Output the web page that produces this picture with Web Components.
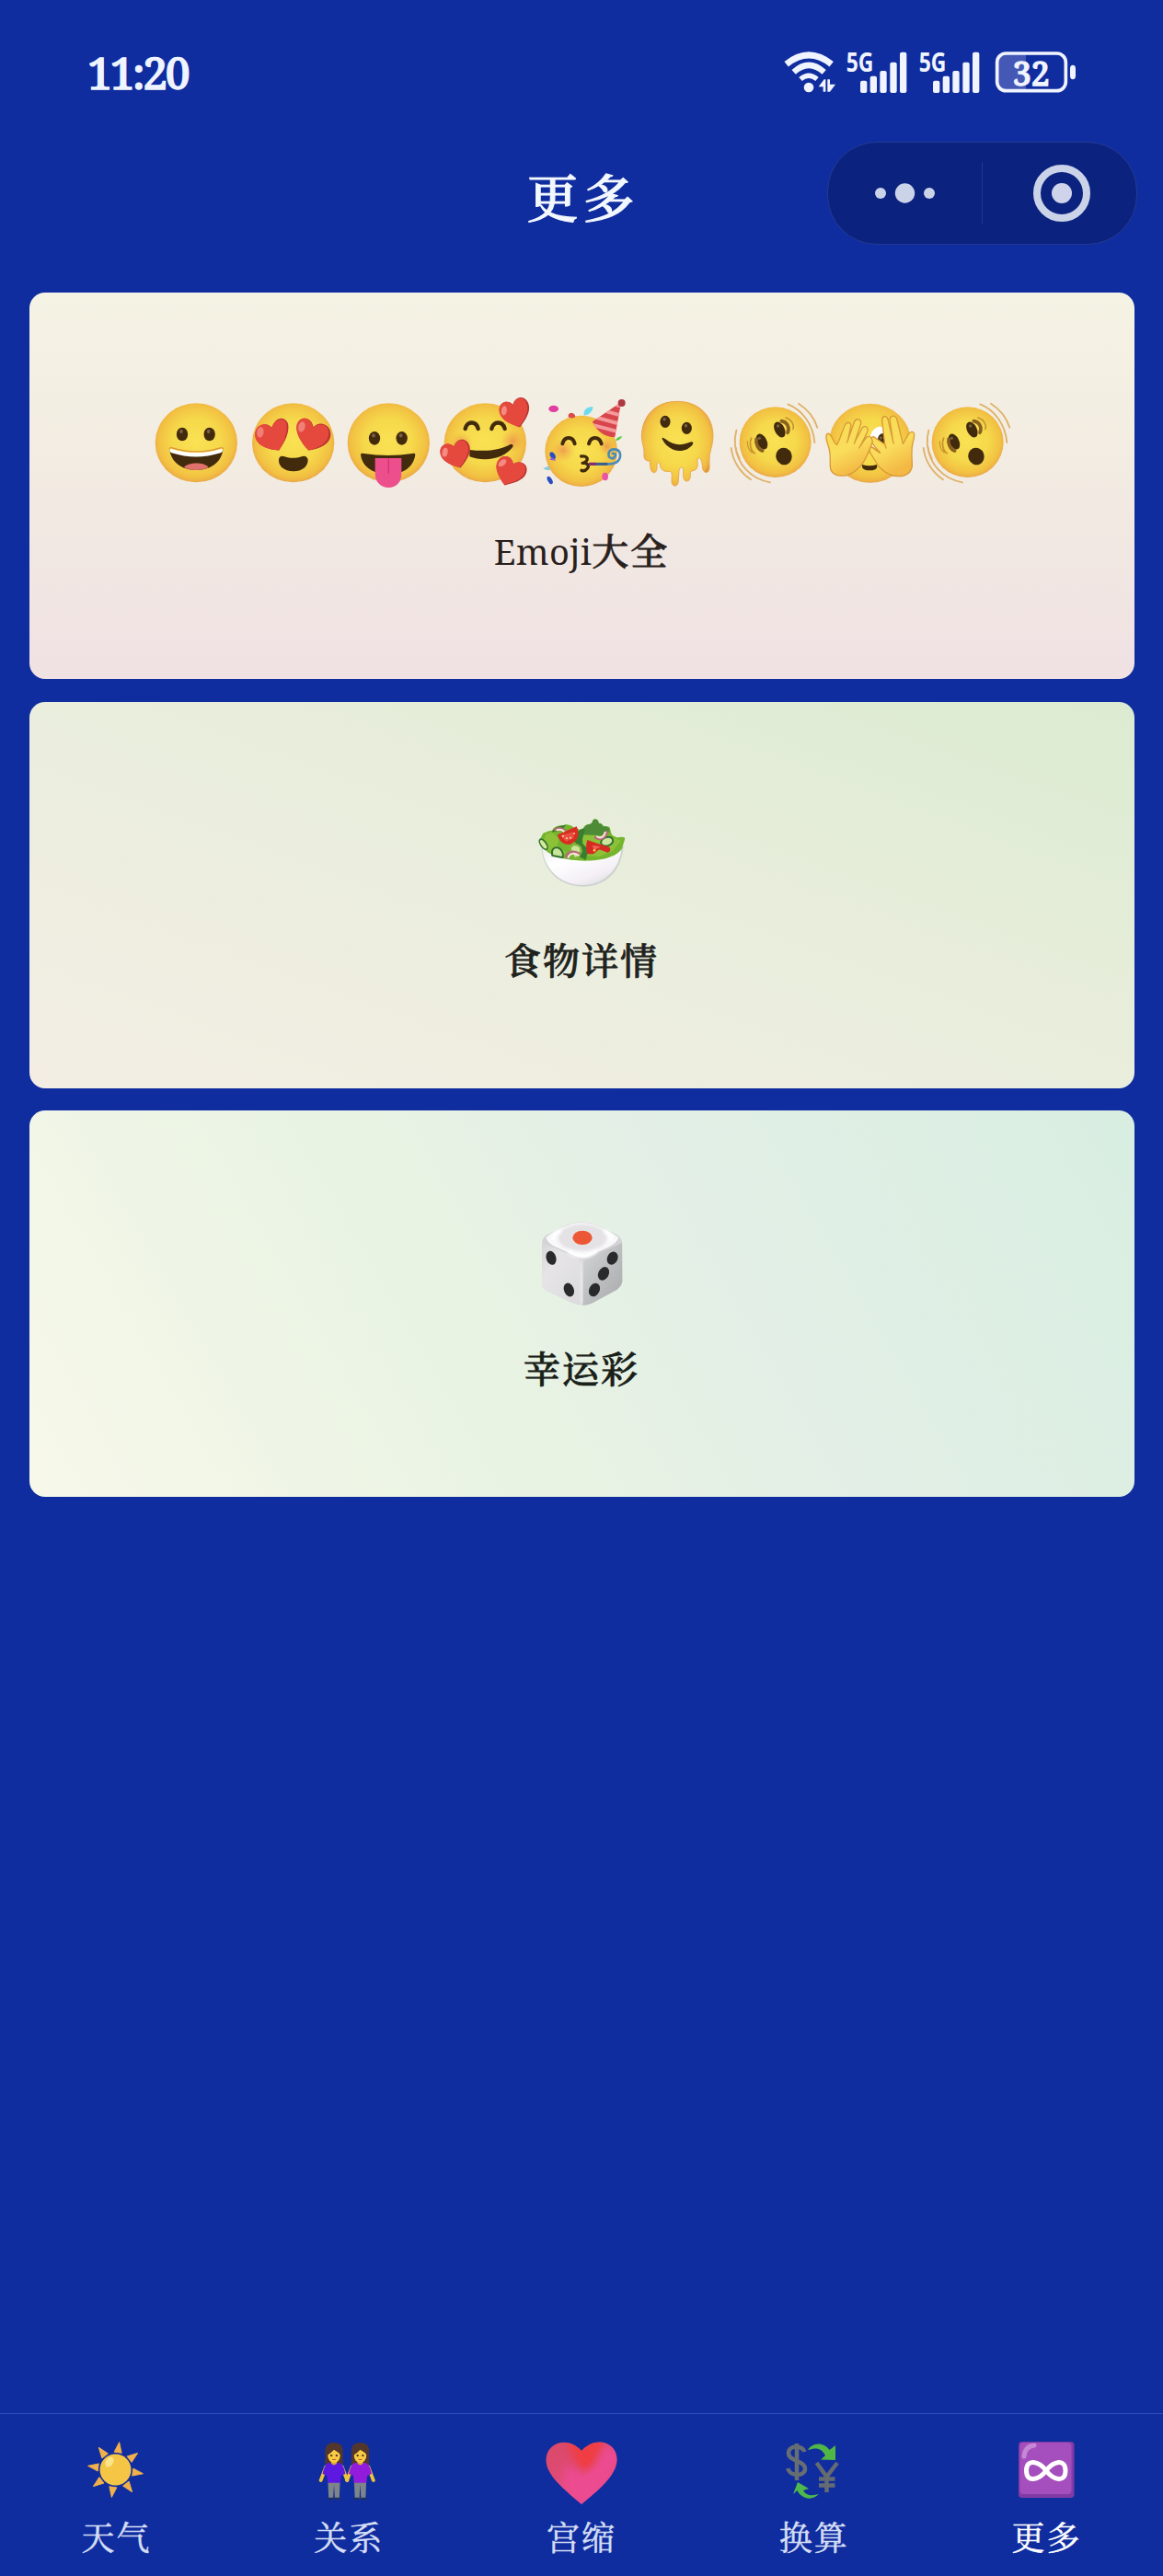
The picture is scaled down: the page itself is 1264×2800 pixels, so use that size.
<!DOCTYPE html>
<html lang="zh-CN">
<head>
<meta charset="utf-8">
<title>更多</title>
<style>
html,body{margin:0;padding:0;background:#102d9f}
body{font-family:"Noto Serif","Noto Serif CJK SC","Source Han Serif SC","DejaVu Serif","Noto Sans CJK SC",serif}
</style>
</head>
<body>
<more-page></more-page>
<script>
const faceDefs = `<defs>
<radialGradient id="f" cx=".5" cy=".48" r=".53"><stop offset="0" stop-color="#f9e253"/><stop offset=".55" stop-color="#f6d84b"/><stop offset=".86" stop-color="#f2c142"/><stop offset=".95" stop-color="#eeb044"/><stop offset="1" stop-color="#dd983c"/></radialGradient>
<radialGradient id="b"><stop offset="0" stop-color="#ed7f4d" stop-opacity=".65"/><stop offset="1" stop-color="#ed9a4d" stop-opacity="0"/></radialGradient>
<linearGradient id="h" x2=".4" y2="1"><stop offset="0" stop-color="#f7dc50"/><stop offset=".6" stop-color="#fadd5c"/><stop offset="1" stop-color="#f3b944"/></linearGradient>
<g id="heart"><path d="M0 52C-28 34-56 12-56-15C-56-35-44-48-27-48C-14-48-5-41 0-31C7-42 17-48 29-48C45-48 56-34 56-16C56 12 26 34 0 52Z" fill="#b83432"/><path d="M-3 50C-30 32-56 12-56-15C-56-35-44-48-27-48C-14-48-5-40-1-29C6-40 15-46 27-46C41-46 50-33 50-17C50 10 22 32-3 50Z" fill="#e5493e"/><ellipse cx="-38" cy="-20" rx="10" ry="17" transform="rotate(28 -38 -20)" fill="#f48a80"/></g>
<g id="eye"><ellipse rx="18.500" ry="22" fill="#422b0d"/><ellipse cx="-3" cy="-9" rx="5.500" ry="6.500" fill="#796046"/></g>
</defs>`;

const shaky = `<ellipse cx="189" cy="212" rx="117" ry="115" fill="url(#f)"/>
<g fill="none" stroke="#dfb169" stroke-width="5.500" stroke-linecap="round"><path d="M62 173C53 207 57 239 72 265"/><path d="M45 231C50 273 74 311 109 334"/><path d="M60 230C66 282 108 333 172 343"/><path d="M230 88C275 106 312 151 317 213"/><path d="M265 86C296 106 316 132 326 164"/></g>
<g fill="#422b0d"><ellipse cx="203" cy="171" rx="16" ry="27" transform="rotate(-27 203 171)"/><ellipse cx="145" cy="210" rx="16" ry="27" transform="rotate(-27 145 210)"/><ellipse cx="217" cy="258" rx="26" ry="28" transform="rotate(-22 217 258)"/></g>
<g fill="none" stroke-linecap="round"><path d="M209 143C228 146 237 164 229 181" stroke="#896020" stroke-width="11"/><path d="M223 132C242 139 251 154 247 169" stroke="#c4932e" stroke-width="5"/><path d="M127 202C124 216 133 236 147 240" stroke="#896020" stroke-width="11"/><path d="M111 198C103 216 109 241 122 248" stroke="#c4932e" stroke-width="5"/><path d="M98 209C98 225 104 239 113 246" stroke="#c4932e" stroke-width="3.500"/></g>
<g fill="#796046"><circle cx="198" cy="159" r="5"/><circle cx="137" cy="199" r="5"/></g>`;

const glyphs = {
grin: {box:'33 30 314 360', art: faceDefs+`<ellipse cx="190" cy="214" rx="134" ry="129" fill="url(#f)"/><use href="#eye" x="144" y="186"/><use href="#eye" x="233" y="186"/>
<path d="M103 236C155 257 228 257 277 236C272 280 233 303 190 303C147 303 108 280 103 236Z" fill="#422b0d"/><path d="M150 294C163 277 216 276 230 294C207 306 174 306 150 294Z" fill="#e0706c"/><path d="M106 233C158 250 222 250 274 233C278 238 276 244 269 247C215 264 163 264 110 247C103 244 101 238 106 233Z" fill="#fff"/><path d="M102 234Q105 227 113 231C166 247 216 247 267 231Q276 227 278 235" fill="none" stroke="#df9a38" stroke-width="4"/>`},
love: {box:'347 30 314 360', art: faceDefs+`<ellipse cx="505" cy="214" rx="134" ry="129" fill="url(#f)"/>
<g transform="translate(441 187) rotate(-2)"><path d="M16 52C-20 48-58 34-60 2C-61-17-50-32-34-34C-21-36-11-31-5-22C2-42 14-53 28-52C42-50 51-38 49-20C47 8 31 32 16 52Z" fill="#b83432"/><path d="M16 52C-20 48-58 34-60 2C-61-17-50-32-34-34C-21-36-11-31-7-20C0-40 14-49 27-49C40-47 46-36 44-19C41 8 29 32 16 52Z" fill="#e5493e"/><ellipse cx="-43" cy="-9" rx="11" ry="17" transform="rotate(10 -43 -9)" fill="#f08076"/></g><g transform="translate(569 187) rotate(2)"><path d="M-12 52C-39 27-58-6-53-30C-49-45-39-53-26-52C-13-51-2-40 1-24C10-35 24-39 37-34C51-29 60-14 58 3C54 34 17 47-12 52Z" fill="#b83432"/><path d="M-12 52C-37 27-58-6-53-30C-49-45-39-53-26-52C-13-51-5-40 0-22C10-33 22-36 34-32C48-27 53-13 51 2C47 30 13 46-12 52Z" fill="#e5493e"/><ellipse cx="-37" cy="-24" rx="11" ry="17" transform="rotate(12 -37 -24)" fill="#f08076"/></g><path d="M458 270C459 258 467 255 477 259C496 265 512 265 532 259C543 254 552 259 553 270C553 292 533 307 506 307C479 307 457 292 458 270Z" fill="#422b0d"/>`},
tongue:{box:'661 30 314 360', art:faceDefs+`<ellipse cx="818" cy="214" rx="134" ry="129" fill="url(#f)"/><use href="#eye" x="772" y="199"/><use href="#eye" x="861" y="199"/><path d="M727 252Q727 247 738 249C790 257 844 257 895 249Q905 247 905 253C900 294 865 316 818 316C768 316 731 292 727 252Z" fill="#422b0d"/><path d="M774 264H860V315C860 340 845 360 818 360C791 360 774 340 774 315Z" fill="#ed4f8c"/><path d="M818 264V315" stroke="#d33476" stroke-width="4"/>`},
adore:{box:'45 30 314 360', art:faceDefs+`<ellipse cx="202" cy="214" rx="134" ry="129" fill="url(#f)"/><circle cx="291" cy="208" r="38" fill="url(#b)"/><circle cx="125" cy="215" r="35" fill="url(#b)"/><g fill="none" stroke="#422b0d" stroke-linecap="round"><path d="M137 168C142 142 173 142 179 168M223 168C228 142 259 142 266 168" stroke-width="13"/></g><path d="M151 237C211 244 255 236 284 219Q294 216 293 226C265 267 201 277 151 259Z" fill="#422b0d"/><use href="#heart" transform="translate(301 117) rotate(-17) scale(.88 .93)"/><use href="#heart" transform="translate(108 252) rotate(-17) scale(.88)"/><use href="#heart" transform="translate(283 309) rotate(22) scale(.90)"/>`},
party:{box:'359 30 314 360', art:faceDefs+`<ellipse cx="514" cy="241" rx="118" ry="116" fill="url(#f)"/><circle cx="455" cy="239" r="38" fill="url(#b)"/><circle cx="597" cy="226" r="28" fill="url(#b)"/><clipPath id="c"><path d="M550 145L645 80L624 196Q573 195 550 145Z"/></clipPath><g clip-path="url(#c)"><path d="M550 145L645 80L624 199Q573 195 550 145Z" fill="#d8464d"/><g stroke="#f59a9b" stroke-width="12"><path d="M535 152L640 179M550 128L650 155M575 106L658 128M605 84L665 100"/></g></g><circle cx="646" cy="84" r="12" fill="#ac3940"/><g fill="none" stroke="#422b0d" stroke-width="12" stroke-linecap="round" stroke-linejoin="round"><path d="M453 217C459 192 487 192 493 217M539 217C545 192 573 192 580 217"/><path d="M514 258C532 255 538 266 530 274C526 280 518 279 518 280C536 278 541 289 534 298C528 306 520 306 515 304" stroke-width="10"/></g><path d="M540 283H605C631 283 643 269 641 251C638 231 609 230 604 247C600 264 619 271 625 257C628 249 617 245 615 252" fill="none" stroke="#4a8bb8" stroke-width="8"/><path d="M540 283H600" stroke="#3d5c8c" stroke-width="9"/><path d="M540 283H562" stroke="#8f2770" stroke-width="9"/><g><ellipse cx="424" cy="103" rx="16" ry="11" fill="#e13da0"/><path d="M523 125C520 105 532 98 552 96C553 111 539 124 523 125Z" fill="#6edcef"/><path d="M472 130Q470 117 482 116Q494 117 495 130Q483 137 472 130Z" fill="#d84b48"/><path d="M626 207Q628 195 648 192Q641 207 626 207Z" fill="#54cb48"/><ellipse cx="421" cy="256" rx="8" ry="13" transform="rotate(-28 421 256)" fill="#294ec3"/><path d="M411 269L419 261L433 272Z" fill="#9b59d0"/><path d="M390 297L408 290L413 302Q401 305 390 297Z" fill="#83c9dc"/><ellipse cx="412" cy="336" rx="7" ry="14" transform="rotate(-30 412 336)" fill="#294ec3"/><ellipse cx="592" cy="324" rx="10" ry="13" fill="#e854a8"/></g>`},
melt:{box:'673 30 314 360',art:faceDefs+`<path d="M829 79C904 79 946 130 946 192C946 224 933 244 934 270V295C934 316 914 315 912 297C911 281 908 264 900 263C890 263 899 286 893 297C886 309 872 300 872 315V322C872 345 850 344 849 324V304C849 290 837 292 835 304L833 340C832 360 811 358 811 340C811 319 816 307 802 307C786 309 776 303 773 286C769 273 762 275 763 292C764 318 744 316 742 295L739 272C724 276 719 263 721 247C722 229 712 211 713 188C717 126 757 79 829 79Z" fill="url(#f)" stroke="#e4a23e" stroke-width="2.500"/><use href="#eye" transform="translate(790 145) scale(.90)"/><use href="#eye" transform="translate(860 166) scale(.90)"/><path d="M780 202Q777 192 791 202C819 224 843 223 869 212Q884 208 880 218C860 249 804 250 780 202Z" fill="#422b0d"/>`},
shakeA:{box:'28 30 314 360',art:faceDefs+shaky},
peek:{box:'342 30 314 360',art:faceDefs+`<ellipse cx="497" cy="215" rx="134" ry="129" fill="url(#f)"/><ellipse cx="529" cy="200" rx="31" ry="39" fill="#fff"/><ellipse cx="538" cy="209" rx="17" ry="26" fill="#422b0d"/><circle cx="532" cy="198" r="5" fill="#796046"/><path d="M471 285Q495 293 519 285C523 300 511 304 495 304C478 304 469 299 471 285Z" fill="#422b0d"/><g fill="url(#h)" stroke="#d99a39" stroke-width="4" stroke-linejoin="round" stroke-linecap="round"><path d="M634 289C634 259 629 236 638 207C645 182 638 173 627 181C618 188 610 213 604 217L584 135C577 121 559 125 562 143L571 205L555 137C550 122 535 127 536 142L545 219L508 194C497 194 499 213 512 226L530 246L508 230C491 224 491 240 501 252C519 281 528 304 562 318C597 330 631 320 634 289Z"/><path d="M571 205L574 216M545 219L549 231M506 230L528 247" fill="none"/><path d="M367 289C366 265 370 246 359 219C351 197 353 181 362 184C374 189 378 217 389 220C398 206 407 170 417 153C424 143 439 148 433 165L425 204L445 147C450 131 471 136 466 154L448 209L470 168C479 153 495 163 487 181L466 223L485 196C498 187 509 204 502 219C487 259 469 304 423 319C395 326 367 319 367 289Z"/><path d="M425 204L421 213M448 209L445 217M466 223L461 231" fill="none"/></g>`},
shakeB:{box:'28 30 314 360',art:faceDefs+shaky},
salad:{box:'238 12 314 360',art:`<defs><linearGradient id="g" x2=".8" y2="1"><stop stop-color="#eeeef0"/><stop offset=".35" stop-color="#fff"/><stop offset=".75" stop-color="#f4f0f6"/><stop offset="1" stop-color="#dfdde3"/></linearGradient></defs>
<path d="M263 181C269 251 315 307 398 308C475 308 526 256 531 174Z" fill="#ced2cf"/><path d="M266 185C273 246 319 301 396 303C469 303 519 251 524 183Z" fill="url(#g)"/>
<path d="M256 154C267 148 262 132 278 131C287 123 300 130 301 120C313 105 334 111 344 105C358 107 366 111 371 118L402 125C396 112 409 107 415 106C421 103 426 107 430 101C427 85 446 83 450 96C449 106 457 102 464 108C469 115 481 109 486 115C490 130 491 142 501 144C513 153 522 142 534 148C539 152 530 167 527 183C508 214 453 224 404 224C350 224 293 210 270 184Z" fill="#74b52d"/>
<path d="M278 137L298 130L320 154L315 174L343 196L332 211L292 198L271 160ZM396 141L426 128L450 149L493 148L523 158L496 191L450 211L405 206Z" fill="#8cc138"/>
<path d="M398 139C397 121 405 108 416 105C423 105 429 102 430 94C436 83 449 89 450 101C459 100 464 107 464 113C478 109 486 117 486 128L465 142Z" fill="#4d8b37"/><path d="M365 154C380 133 389 116 403 119C409 129 394 146 397 167L417 188L408 221L387 211L398 192ZM297 131C304 112 322 110 344 107L330 123Z" fill="#397d2e"/>
<ellipse cx="270" cy="170" rx="9" ry="19" transform="rotate(-35 270 170)" fill="#d5e89b" stroke="#32722f" stroke-width="5"/><path d="M299 207C294 187 303 180 316 181C328 184 337 199 333 213L315 210Z" fill="#c9e598" stroke="#32722f" stroke-width="6"/><path d="M357 186C359 170 378 166 390 179C397 193 384 215 371 216Z" fill="#cde49a" stroke="#82b63e" stroke-width="7"/>
<ellipse cx="477" cy="161" rx="20" ry="14" transform="rotate(-18 477 161)" fill="#cde69f" stroke="#32722f" stroke-width="6"/>
<path d="M316 139L378 112C389 133 385 160 356 171C338 173 320 161 316 139Z" fill="#db2c22"/><path d="M325 142L366 130L369 150L344 161Z" fill="#e8513f"/><g fill="#f5dbab"><circle cx="334" cy="143" r="3"/><circle cx="346" cy="151" r="3"/><circle cx="358" cy="149" r="3"/><circle cx="370" cy="135" r="3"/></g>
<path d="M413 156L441 166L485 179Q493 192 479 197L452 187L433 202L414 202Q405 180 413 156Z" fill="#d62a23"/><path d="M429 173L456 178L435 190Z" fill="#ec6553"/><circle cx="436" cy="190" r="4" fill="#f6cf57"/>
<path d="M305 124Q326 112 341 128M345 215C348 194 370 190 388 203M437 146Q465 164 479 127" fill="none" stroke="#b66d76" stroke-width="10"/><path d="M312 124Q327 119 338 129M350 215C355 198 373 196 386 208M443 144Q464 157 472 129" fill="none" stroke="#fae6dd" stroke-width="6"/>`},
dice:{box:'238 24 314 360',art:`<defs><linearGradient id="l" x2="1" y2="1"><stop stop-color="#d5d5d7"/><stop offset=".3" stop-color="#e6e4e7"/><stop offset="1" stop-color="#dadadc"/></linearGradient><linearGradient id="r" x2="1" y2="1"><stop stop-color="#d5d6d7"/><stop offset=".6" stop-color="#b9babb"/><stop offset="1" stop-color="#a9aaab"/></linearGradient><filter id="s" x="-30%" y="-30%" width="160%" height="160%"><feGaussianBlur stdDeviation="4"/></filter></defs>
<path d="M266 152Q265 132 284 122L354 88Q395 76 438 89L508 122Q526 133 527 152V274Q526 290 510 302L430 346Q398 357 364 346L281 306Q266 297 265 282V158Z" fill="#d3d3d5"/><path d="M268 150L385 202Q399 212 399 353Q380 354 364 346L281 306Q266 297 265 282V158Z" fill="url(#l)"/><path d="M398 354L401 205L526 150L527 274Q526 290 510 302L430 346Q415 354 398 354Z" fill="url(#r)"/><path d="M391 208H397V348H391Z" fill="#efedf0" filter="url(#s)"/>
<path d="M278 132Q308 108 360 88Q397 80 435 89Q489 111 515 133Q510 151 477 166L420 192Q397 203 373 192L300 158Q282 147 278 132Z" fill="#f8f8fa"/><ellipse cx="397" cy="133" rx="80" ry="44" fill="#e5e2e6" filter="url(#s)"/><path d="M300 141Q302 118 327 111M492 142Q491 121 468 111M350 176Q398 211 443 176" stroke="#fff" stroke-width="12" fill="none" filter="url(#s)"/><ellipse cx="397" cy="133" rx="32" ry="23" fill="#ec5836"/><g fill="#292a2b"><ellipse cx="295" cy="199" rx="16" ry="23" transform="rotate(-17 295 199)"/><ellipse cx="353" cy="303" rx="16" ry="23" transform="rotate(-22 353 303)"/><ellipse cx="495" cy="200" rx="17" ry="22" transform="rotate(25 495 200)"/><ellipse cx="466" cy="250" rx="17" ry="23" transform="rotate(27 466 250)"/><ellipse cx="436" cy="303" rx="17" ry="23" transform="rotate(27 436 303)"/></g>`}
};

// Tab pictures share an 80 x 80 drawing area.
const woman = (shirt) => `<path d="M-10 19V0C-10-14 10-14 10 0V19Z" fill="#53362c"/><path d="M-7 39L-6 66H-1L0 46L1 66H6L7 39Z" fill="#7e8588"/><path d="M-6 64H-1V67H-8ZM1 64H6L8 67H1Z" fill="#203056"/><path d="M-9 22L-15 41M9 22L15 41" stroke="#efc33d" stroke-width="4" stroke-linecap="round"/><path d="M-6 17H6Q11 19 13 32L8 34L7 44H-7L-8 34L-13 32Q-11 19-6 17Z" fill="${shirt}"/><path d="M-3 12H3V18L0 20L-3 18Z" fill="#dba934"/><ellipse cy="7" rx="7" ry="10" fill="#f8cc43"/><path d="M-8 7Q-8-6 1-6Q9-5 8 7Q5 2 0-1Q-3 3-8 7Z" fill="#53362c"/><g fill="#49301f"><circle cx="-3" cy="7" r="1.300"/><circle cx="3" cy="7" r="1.300"/></g><path d="M-2 12Q0 13 2 12" stroke="#b74127" stroke-width="1.300" fill="none"/>`;
const tabArt = {
sun:`<g fill="#f1b04b" stroke="#f1b04b" stroke-width="1" stroke-linejoin="round">${[8,53,98,143,188,233,278,323].map(a=>`<path d="M39.500 9.500L43.500 20.500H35.500Z" transform="rotate(${a} 39.500 39.500)"/>`).join('')}</g><circle cx="39.500" cy="39.500" r="17" fill="#f5c646"/><ellipse cx="33" cy="31" rx="4" ry="6" transform="rotate(30 33 31)" fill="#fbe489"/>`,
pair:`<g transform="translate(24 18.500) scale(.96 .80)">${woman('#5d19e2')}</g><g transform="translate(52.500 18.500) scale(.96 .80)">${woman('#931bdb')}</g>`,
heart:`<defs><linearGradient id="p" x1=".1" y1=".1" x2=".5" y2="1"><stop stop-color="#d94a67"/><stop offset=".5" stop-color="#df4a75"/><stop offset="1" stop-color="#ef4b94"/></linearGradient><filter id="q"><feGaussianBlur stdDeviation="4"/></filter><clipPath id="k"><path d="M40 77C20 60 1.500 45 1.500 29C1.500 10 25 2 40 19C55 2 79 9 78.500 29C78 46 58 62 40 77Z"/></clipPath></defs><g clip-path="url(#k)"><path d="M0 0H80V80H0Z" fill="url(#p)"/><path d="M24 9L68 5L57 28L46 44L36 35Z" fill="#f03d43" filter="url(#q)"/><path d="M66 11L84 22L58 61L39 78L20 58L24 33L40 46L56 36Z" fill="#ed4b91" filter="url(#q)"/></g>`,
exchange:`<path d="M21 11V51M29.500 20C28 13 12 12 12 21.500C12 31 30 29 30 38.500C30 47 13 47 11.500 38" fill="none" stroke="#666e74" stroke-width="4.500"/><path d="M42.500 32L53.500 47L65 32M53.500 47V64M45 49.500H62.500M45 56.500H62.500" fill="none" stroke="#646b71" stroke-width="4.500"/><path d="M33.500 17C40 9 51 10 56.500 18L63 13V29L47 28.500L52 24C48 16 42 15 33.500 18Z" fill="#50b747"/><path d="M45 66C37 74 26 71 21.500 62L17 66L22 53L34 60L28 62C31 68 38 68 45 66Z" fill="#4eb84c"/>`,
infinity:`<rect x="9" y="9" width="60.500" height="61" rx="4" fill="#823ba4"/><rect x="10.500" y="10" width="56" height="56" rx="4" fill="#a44fbd"/><path d="M15 25Q16 14 26 13" stroke="#c588d4" stroke-width="5" fill="none" stroke-linecap="round"/><path d="M39 40.500C31 30 17.500 27 17.500 40.500C17.500 54 31 51 39 40.500C47 30 60 27 60 40.500C60 54 47 51 39 40.500Z" fill="none" stroke="#fff" stroke-width="5"/>`
};

const signal = `<text x="302" y="145" font-size="87" font-weight="700" textLength="89" lengthAdjust="spacingAndGlyphs">5G</text><rect x="348" y="173" width="22" height="40" rx="6"/><rect x="380" y="158" width="22" height="55" rx="6"/><rect x="412" y="141" width="22" height="72" rx="6"/><rect x="445" y="113" width="22" height="100" rx="6"/><rect x="477" y="80" width="22" height="133" rx="6"/>`;

class StatusBar extends HTMLElement{constructor(){super();this.attachShadow({mode:'open'}).innerHTML=`<style>
:host{display:flex;justify-content:space-between;align-items:flex-start;height:112px;padding:41px 93px 0 95px;box-sizing:border-box;color:#eff4ff}
.time{font-size:48px;line-height:75px;font-weight:500;letter-spacing:-2.500px;white-space:nowrap;-webkit-text-stroke:1.300px #eff4ff}
svg{display:block;overflow:visible;margin-top:9px}
text{font-family:"Noto Sans",sans-serif}
text.level{font-family:inherit}
</style><div class="time">11:20</div><svg width="320" height="56" viewBox="96 60 960 168"><g fill="none" stroke="#f0f4ff"><path d="M107 119Q180 60 254 119" stroke-width="21"/><path d="M131 145Q180 100 230 145" stroke-width="19"/><path d="M153 168Q180 145 207 168" stroke-width="16"/></g><g fill="#f0f4ff"><circle cx="180" cy="195" r="16"/><path d="M212 193L230 169H235V209H227V193ZM241 169H249V185H267L249 209H241Z"/>
<g>${signal}</g><g transform="translate(237)">${signal}</g>
<path d="M1032 134Q1032 122 1041 122Q1050 122 1050 134V156Q1050 169 1041 169Q1032 169 1032 156Z"/></g><path d="M797 88H888V203H797Z" fill="#4658b5"/><rect x="794" y="84" width="224" height="122" rx="29" fill="none" stroke="#f0f4ff" stroke-width="11"/><text class="level" x="845" y="188" font-size="109" font-weight="500" textLength="120" lengthAdjust="spacingAndGlyphs" fill="#f0f4ff" stroke="#f0f4ff" stroke-width="4">32</text></svg>`}}
customElements.define('status-bar',StatusBar);

class NavBar extends HTMLElement{constructor(){super();this.attachShadow({mode:'open'}).innerHTML=`<style>
:host{display:grid;grid-template-columns:1fr auto 1fr;align-items:center;height:206px;padding:0 28px;box-sizing:border-box}
h1{grid-column:2;margin:0;color:#f3f8ff;font-size:56px;line-height:80px;font-weight:500;letter-spacing:5px;align-self:start;padding:62px 0 0 3px;-webkit-text-stroke:1.200px #f3f8ff}
.capsule{grid-column:3;justify-self:end;align-self:start;margin-top:42px;display:flex;width:337px;height:112px;box-sizing:border-box;border:1px solid #233b94;border-radius:54px;background:#0b237f}
.capsule svg{display:block;flex:1;width:50%}
i{width:1px;height:68px;margin-top:21px;background:#20378d}
</style><h1><slot></slot></h1><div class="capsule"><svg viewBox="0 0 167 110"><g fill="#cbd3e9"><circle cx="57" cy="55" r="6"/><circle cx="83.500" cy="55" r="10.700"/><circle cx="110" cy="55" r="6"/></g></svg><i></i><svg viewBox="0 0 167 110"><circle cx="86" cy="55" r="27" fill="none" stroke="#cbd3e9" stroke-width="8"/><circle cx="86" cy="55" r="11" fill="#cfd4ea"/></svg></div>`}}
customElements.define('nav-bar',NavBar);

class EmojiGlyph extends HTMLElement{connectedCallback(){const g=glyphs[this.getAttribute('name')];this.attachShadow({mode:'open'}).innerHTML=`<style>:host{display:block;width:104.670px;height:120px}svg{display:block;width:100%;height:100%;overflow:visible}</style><svg viewBox="${g.box}">${g.art}</svg>`}}
customElements.define('emoji-glyph',EmojiGlyph);

class FeatureCard extends HTMLElement{constructor(){super();this.attachShadow({mode:'open'}).innerHTML=`<style>
:host{display:flex;flex-direction:column;align-items:center;height:420px;padding:102px 1px 0 0;box-sizing:border-box;border-radius:17px;background:var(--card-bg);color:var(--ink,#20221c)}
.icons{display:flex}
.label{margin-top:29px;font-size:40px;line-height:60px;letter-spacing:2px;font-weight:500;-webkit-text-stroke:.8px currentColor}
::slotted(.latin){font-size:38px;font-weight:400;letter-spacing:.3px;line-height:1;-webkit-text-stroke:0}
</style><div class="icons"><slot name="icon"></slot></div><div class="label"><slot></slot></div>`}}
customElements.define('feature-card',FeatureCard);

class TabItem extends HTMLElement{connectedCallback(){this.attachShadow({mode:'open'}).innerHTML=`<style>
:host{display:flex;flex:1;flex-direction:column;align-items:center;padding-top:21px;color:#d5def5}
:host([active]){color:#fff}
svg{display:block;width:80px;height:80px}
span{margin-top:9px;font-size:36px;line-height:50px;letter-spacing:2px;-webkit-text-stroke:.5px currentColor}
</style><svg viewBox="0 0 80 80">${tabArt[this.getAttribute('icon')]}</svg><span><slot></slot></span>`}}
customElements.define('tab-item',TabItem);

class TabBar extends HTMLElement{constructor(){super();this.attachShadow({mode:'open'}).innerHTML=`<style>:host{display:flex;height:177px;border-top:1px solid #3150bb;box-sizing:border-box}</style><slot></slot>`}}
customElements.define('tab-bar',TabBar);

class MorePage extends HTMLElement{constructor(){super();this.attachShadow({mode:'open'}).innerHTML=`<style>
:host{display:flex;flex-direction:column;width:1264px;height:2800px;background:#102d9f}
main{display:flex;flex:1;flex-direction:column;gap:24.500px;padding:0 31px 0 32px}
.a{--card-bg:linear-gradient(180deg,#f5f3e4,#f2ebe2 48%,#f0e1e3);--ink:#291f1c}
.b{--card-bg:linear-gradient(20deg,#f3ede4 0%,#eaeedd 50%,#dbebd1 100%)}
.c{--card-bg:linear-gradient(60deg,#f7f8ea 0%,#e8f3e3 40%,#e3efe6 62%,#d8eee1 100%);--ink:#182018}
</style><status-bar></status-bar><nav-bar>更多</nav-bar><main>
<feature-card class="a">${['grin','love','tongue','adore','party','melt','shakeA','peek','shakeB'].map(n=>`<emoji-glyph slot="icon" name="${n}"></emoji-glyph>`).join('')}<span class="latin">Emoji</span>大全</feature-card>
<feature-card class="b"><emoji-glyph slot="icon" name="salad"></emoji-glyph>食物详情</feature-card>
<feature-card class="c"><emoji-glyph slot="icon" name="dice"></emoji-glyph>幸运彩</feature-card>
</main><tab-bar><tab-item icon="sun">天气</tab-item><tab-item icon="pair">关系</tab-item><tab-item icon="heart">宫缩</tab-item><tab-item icon="exchange">换算</tab-item><tab-item icon="infinity" active>更多</tab-item></tab-bar>`}}
customElements.define('more-page',MorePage);
</script>
</body>
</html>
